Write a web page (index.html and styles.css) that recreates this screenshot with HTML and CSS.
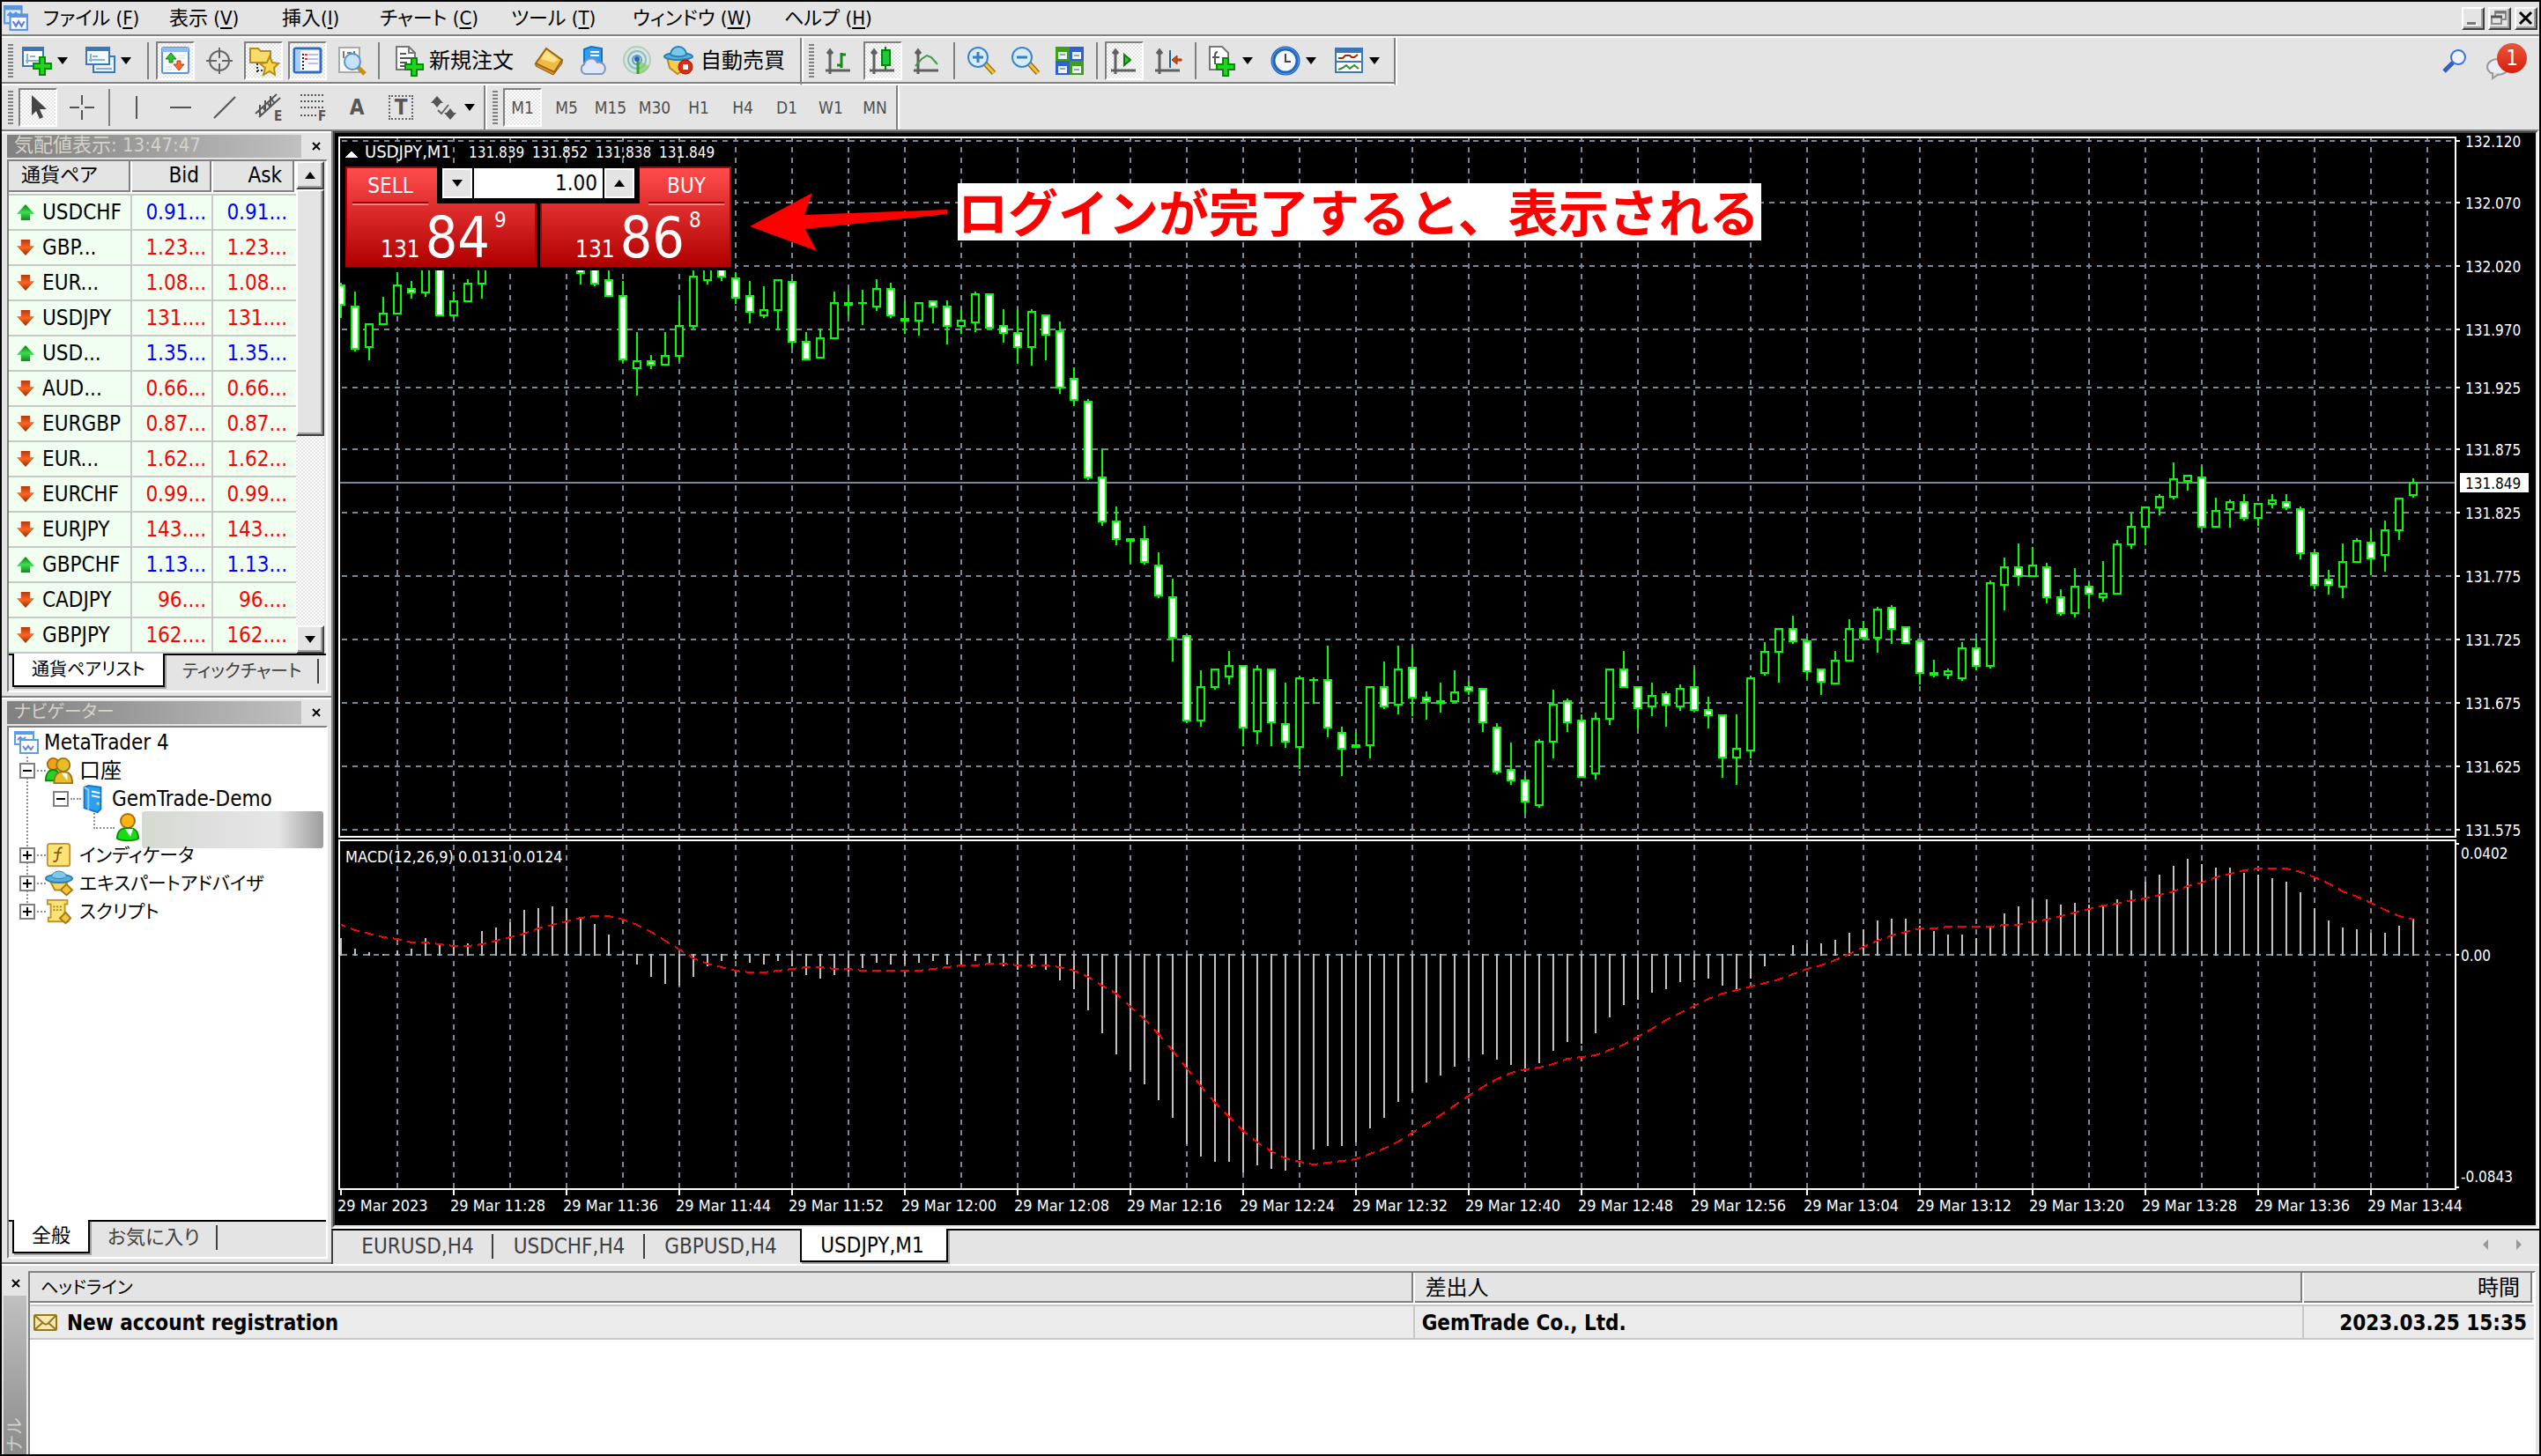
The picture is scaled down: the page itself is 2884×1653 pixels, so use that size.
FILE: index.html
```html
<!DOCTYPE html>
<html lang="ja">
<head>
<meta charset="utf-8">
<title>MetaTrader 4 - USDJPY,M1</title>
<link rel="stylesheet" href="styles.css">
</head>
<body>

<header class="menubar">
  <svg class="app-icon" viewBox="0 0 26 28"><rect x="1" y="1" width="18" height="18" fill="#dcebfc" stroke="#5b93dc" stroke-width="2"/><path d="M0 1h20v4H0z" fill="#5b93dc"/><path d="M4 11l3-3 3 3 3-3 3 3" fill="none" stroke="#5b93dc" stroke-width="2"/><rect x="7" y="10" width="18" height="16" fill="#fff" stroke="#5b93dc" stroke-width="2"/><path d="M6 9h20v4H6z" fill="#5b93dc"/><path d="M10 17l3 5 3-5 3 5 3-5" fill="none" stroke="#5b7fe0" stroke-width="2"/></svg>
  <nav class="menu">
    <button>ファイル (<u>F</u>)</button>
    <button>表示 (<u>V</u>)</button>
    <button>挿入(<u>I</u>)</button>
    <button>チャート (<u>C</u>)</button>
    <button>ツール (<u>T</u>)</button>
    <button>ウィンドウ (<u>W</u>)</button>
    <button>ヘルプ (<u>H</u>)</button>
  </nav>
  <div class="window-buttons">
    <button aria-label="最小化"><svg viewBox="0 0 22 22"><path d="M4 18h12" stroke="#fff" stroke-width="2"/><path d="M4 16.500h10" stroke="#777" stroke-width="3"/></svg></button>
    <button aria-label="元に戻す"><svg viewBox="0 0 22 22"><path d="M6 8V3h12v9h-4" fill="none" stroke="#888" stroke-width="2"/><path d="M6 4h12" stroke="#777" stroke-width="3"/><rect x="2" y="9" width="11" height="8" fill="#e4e4e4" stroke="#888" stroke-width="2"/><path d="M1 9h13" stroke="#555" stroke-width="3"/></svg></button>
    <button aria-label="閉じる"><svg viewBox="0 0 22 22"><path d="M4 4l13 13M17 4L4 17" stroke="#000" stroke-width="3"/></svg></button>
  </div>
</header>

<div class="toolbar-row">
  <div class="toolbar">
    <span class="grip"></span>
    <button class="tool drop" aria-label="新規チャート"><svg class="icon" viewBox="0 0 34 34"><rect x="1" y="2" width="23" height="21" fill="#fff" stroke="#3a77b8" stroke-width="2"/><path d="M0 1h25v5H0z" fill="#3a77b8"/><path d="M6 9v11M4 17h16M9 12h6" stroke="#8ab0d8" stroke-width="2"/><path d="M20 13h6v7h7v6h-7v7h-6v-7h-7v-6h7z" fill="#1fd51f" stroke="#078a07" stroke-width="2"/></svg><i class="caret"></i></button>
    <button class="tool drop" aria-label="プロファイル"><svg class="icon" viewBox="0 0 34 34"><rect x="9" y="12" width="24" height="18" fill="#eaf4ff" stroke="#3a77b8" stroke-width="2"/><path d="M12 26h18" stroke="#8ab0d8" stroke-width="2"/><rect x="1" y="2" width="26" height="19" fill="#f4f9ff" stroke="#3a77b8" stroke-width="2"/><path d="M0 1h28v5H0z" fill="#3a77b8"/><path d="M6 9v9M4 16h18M8 12h6" stroke="#8ab0d8" stroke-width="2"/></svg><i class="caret"></i></button>
    <span class="sep"></span>
    <button class="tool pressed" aria-label="気配値表示"><svg class="icon" viewBox="0 0 34 34"><rect x="2" y="2" width="30" height="29" rx="2" fill="#fff" stroke="#5b93dc" stroke-width="2"/><path d="M2 2h30v5H2z" fill="#8fbcf0"/><path d="M12 8l6 7h-4v4h-4v-4H6z" fill="#2fc12f" stroke="#0a7d0a"/><path d="M21 28l-6-7h4v-4h4v4h4z" fill="#ff6a35" stroke="#c13a10"/><path d="M20 11h8M20 14h8M6 24h7M6 27h7" stroke="#cdd6e2"/></svg></button>
    <button class="tool" aria-label="データウィンドウ"><svg class="icon" viewBox="0 0 34 34"><circle cx="17" cy="17" r="11" fill="none" stroke="#666" stroke-width="2"/><path d="M17 2v12M17 20v12M2 17h12M20 17h12" stroke="#666" stroke-width="2"/></svg></button>
    <button class="tool pressed" aria-label="ナビゲーター"><svg class="icon" viewBox="0 0 34 34"><path d="M2 3h9l3 3h11v13H2z" fill="#f6dd6d" stroke="#b58b14" stroke-width="2"/><path d="M10 20v12M10 28h8" stroke="#333" stroke-dasharray="2 2" stroke-width="2"/><path d="M24 12l3 7 7 1-5 5 1 8-6-4-7 4 2-8-6-5 8-1z" fill="#ffd94d" stroke="#b58b14" stroke-width="2"/></svg></button>
    <button class="tool pressed" aria-label="ターミナル"><svg class="icon" viewBox="0 0 34 34"><rect x="2" y="3" width="30" height="27" rx="2" fill="#fff" stroke="#2f6cc0" stroke-width="3"/><path d="M3 4h6v25H3z" fill="#a8cdf5"/><path d="M12 9v18" stroke="#222" stroke-width="2" stroke-dasharray="2 2"/><path d="M14 10h3M14 15h3" stroke="#e33" stroke-width="2"/><path d="M18 10h11M18 15h11M18 20h11" stroke="#b4c2f2" stroke-width="2"/></svg></button>
    <button class="tool" aria-label="ストラテジーテスター"><svg class="icon" viewBox="0 0 34 34"><path d="M3 2h23v28H3z" fill="#fafafa" stroke="#aaa" stroke-width="2"/><path d="M8 6v8M20 6v6M12 8h5" stroke="#777" stroke-width="2"/><path d="M24 24l8 8" stroke="#c6920e" stroke-width="5"/><circle cx="18" cy="18" r="9" fill="#bfe0fb" fill-opacity=".9" stroke="#5c93c9" stroke-width="2"/></svg></button>
    <span class="sep"></span>
    <button class="tool labelled order"><svg class="icon" viewBox="0 0 34 34"><path d="M3 1h14l7 7v19H3z" fill="#fff" stroke="#777" stroke-width="2"/><path d="M17 1v7h7" fill="none" stroke="#777" stroke-width="2"/><path d="M7 9h7M7 14h13M7 19h8M7 23h6" stroke="#555" stroke-width="2"/><path d="M20 14h6v7h7v6h-7v7h-6v-7h-7v-6h7z" fill="#1fd51f" stroke="#078a07" stroke-width="2"/></svg>新規注文</button>
    <button class="tool" aria-label="MetaEditor"><svg class="icon" viewBox="0 0 34 34"><path d="M14 3l18 13-9 14L2 20z" fill="#f0bb45" stroke="#9a6512" stroke-width="2"/><path d="M2 20l21 10 9-14v4L22 33 2 23z" fill="#d8901c" stroke="#8a5a10"/><path d="M14 5l14 11-6 3L8 15z" fill="#ffe08c"/></svg></button>
    <button class="tool" aria-label="VPS"><svg class="icon" viewBox="0 0 34 34"><path d="M7 4l8-3 12 2v19H7z" fill="#2f9df0" stroke="#1473c0" stroke-width="2"/><path d="M14 7h10M14 11h10" stroke="#fff" stroke-width="2"/><path d="M8 32a6 6 0 0 1-1-11 8 8 0 0 1 15-2 7 7 0 0 1 5 13z" fill="#dfe6f6" stroke="#8195bd" stroke-width="2"/></svg></button>
    <button class="tool" aria-label="シグナル"><svg class="icon" viewBox="0 0 34 34"><circle cx="17" cy="16" r="15" fill="#d4e8d8" stroke="#b4ccbe" stroke-width="2"/><circle cx="17" cy="16" r="10" fill="none" stroke="#8fb8d4" stroke-width="2"/><circle cx="17" cy="16" r="5" fill="none" stroke="#5f96cc" stroke-width="2"/><path d="M17 16v16h3a15 15 0 0 0 11-9z" fill="#7dcb5a" fill-opacity=".6"/><path d="M18 15v17" stroke="#35a52b" stroke-width="3"/><circle cx="17" cy="15" r="3" fill="#2b62c0"/></svg></button>
    <button class="tool labelled auto"><svg class="icon" viewBox="0 0 34 34"><path d="M4 13h24l-3 13-9 6-9-7z" fill="#f8cd4a" stroke="#c08a14" stroke-width="2"/><ellipse cx="17" cy="12" rx="16" ry="4" fill="#58b0e0" stroke="#2a7fb4" stroke-width="2"/><path d="M8 10c0-5 4-9 9-9s9 4 9 9c-4 3-14 3-18 0z" fill="#7cc9ee" stroke="#2a7fb4" stroke-width="2"/><circle cx="25" cy="24" r="8" fill="#e02a14" stroke="#a81404"/><path d="M22 21h6v6h-6z" fill="#fff"/></svg>自動売買</button>
  </div>
  <div class="toolbar">
    <span class="grip"></span>
    <button class="tool" aria-label="バーチャート"><svg class="icon" viewBox="0 0 34 34"><path class="axes" d="M7 6v26M2 28h28M4 9l3-4 3 4"/><path d="M20 8v17M20 10h5M15 22h5" stroke="#178a17" stroke-width="3"/></svg></button>
    <button class="tool pressed" aria-label="ローソク足"><svg class="icon" viewBox="0 0 34 34"><path class="axes" d="M7 6v26M2 28h28M4 9l3-4 3 4"/><path d="M20 1v26" stroke="#0a7d0a" stroke-width="2"/><rect x="16" y="5" width="9" height="17" fill="#1dc93d" stroke="#0a7d0a" stroke-width="2"/></svg></button>
    <button class="tool" aria-label="ラインチャート"><svg class="icon" viewBox="0 0 34 34"><path class="axes" d="M7 6v26M2 28h28M4 9l3-4 3 4"/><path d="M4 23l7-8 6-4 5 2 7 8" fill="none" stroke="#3f9c46" stroke-width="2"/></svg></button>
    <span class="sep"></span>
    <button class="tool" aria-label="ズームイン"><svg class="icon" viewBox="0 0 34 34"><path d="M21 20l10 11" stroke="#9a7410" stroke-width="6"/><path d="M21 20l10 11" stroke="#f2c63c" stroke-width="3"/><circle cx="13" cy="13" r="11" fill="#d5ecfc" stroke="#3f85c8" stroke-width="2"/><path d="M13 7v12M7 13h12" stroke="#3f7fb4" stroke-width="3"/></svg></button>
    <button class="tool" aria-label="ズームアウト"><svg class="icon" viewBox="0 0 34 34"><path d="M21 20l10 11" stroke="#9a7410" stroke-width="6"/><path d="M21 20l10 11" stroke="#f2c63c" stroke-width="3"/><circle cx="13" cy="13" r="11" fill="#d5ecfc" stroke="#3f85c8" stroke-width="2"/><path d="M7 13h12" stroke="#3f7fb4" stroke-width="3"/></svg></button>
    <button class="tool" aria-label="整列"><svg class="icon" viewBox="0 0 34 34"><path d="M1 1h16v16H1zM17 17h16v16H17z" fill="#3f9f17"/><path d="M17 1h16v16H17zM1 17h16v16H1z" fill="#2f62d0"/><path d="M4 7h10v8H4zM20 7h10v8H20zM4 23h10v8H4zM20 23h10v8H20z" fill="#eef4ff"/><path d="M6 10h6M22 11h6M6 26h6M22 27h6" stroke="#8aa" stroke-width="2"/></svg></button>
    <span class="sep"></span>
    <button class="tool pressed" aria-label="自動スクロール"><svg class="icon" viewBox="0 0 34 34"><path class="axes" d="M7 6v26M2 28h28M4 9l3-4 3 4"/><path d="M17 10l7 6-7 6z" fill="#36c236" stroke="#0a7d0a" stroke-width="2"/></svg></button>
    <button class="tool" aria-label="チャートシフト"><svg class="icon" viewBox="0 0 34 34"><path class="axes" d="M7 6v26M2 28h28M4 9l3-4 3 4"/><path d="M19 5v20" stroke="#176a9c" stroke-width="2"/><path d="M21 16l6-5v4h5v2h-5v4z" fill="#d24b12" stroke="#a03000"/></svg></button>
    <span class="sep"></span>
    <button class="tool drop" aria-label="インディケータ"><svg class="icon" viewBox="0 0 34 34"><path d="M3 1h14l7 7v19H3z" fill="#fff" stroke="#777" stroke-width="2"/><path d="M12 7c-4 0-3 5-3 14M6 13h8" fill="none" stroke="#555" stroke-width="2"/><path d="M18 14h6v7h7v6h-7v7h-6v-7h-7v-6h7z" fill="#1fd51f" stroke="#078a07" stroke-width="2"/></svg><i class="caret"></i></button>
    <button class="tool drop" aria-label="時間足設定"><svg class="icon" viewBox="0 0 34 34"><circle cx="17" cy="17" r="14" fill="#f4f8fd" stroke="#2166bd" stroke-width="5"/><circle cx="17" cy="17" r="15" fill="none" stroke="#5fa0ea" stroke-width="1"/><path d="M17 9v9h6" fill="none" stroke="#444" stroke-width="2"/></svg><i class="caret"></i></button>
    <button class="tool drop" aria-label="定型チャート"><svg class="icon" viewBox="0 0 34 34"><rect x="2" y="3" width="30" height="27" fill="#fff" stroke="#3a77b8" stroke-width="2"/><path d="M1 2h32v6H1zM1 17h32v2H1z" fill="#3a77b8"/><path d="M5 14h5l3-3h5l2 2h3l4-3" fill="none" stroke="#9a2a10" stroke-width="2"/><path d="M5 27l5-2 4-3 4 4 5-4 5 4" fill="none" stroke="#2f8f2f" stroke-width="2"/></svg><i class="caret"></i></button>
  </div>
  <div class="status-icons">
    <button aria-label="検索"><svg viewBox="0 0 28 28"><path d="M2 26l10-10" stroke="#2f5fbf" stroke-width="5"/><circle cx="18" cy="10" r="8" fill="#eef3fb" stroke="#3a6fd8" stroke-width="2"/></svg></button>
    <button class="chat" aria-label="通知"><svg viewBox="0 0 28 28"><ellipse cx="13" cy="13" rx="12" ry="9" fill="#ececf4" stroke="#999" stroke-width="2"/><path d="M7 19v7l7-5" fill="#ddd" stroke="#999" stroke-width="2"/></svg><span class="badge">1</span></button>
  </div>
</div>

<div class="toolbar-row second">
  <div class="toolbar">
    <span class="grip"></span>
    <button class="tool pressed" aria-label="カーソル"><svg class="icon" viewBox="0 0 34 34"><path d="M10 3v23l5-5 4 9 4-2-4-9h8z" fill="#444"/></svg></button>
    <button class="tool" aria-label="十字カーソル"><svg class="icon thin" viewBox="0 0 34 34"><path d="M17 3v11M17 20v11M3 17h11M20 17h11"/></svg></button>
    <span class="sep"></span>
    <button class="tool" aria-label="垂直線"><svg class="icon thin" viewBox="0 0 34 34"><path d="M17 4v26"/></svg></button>
    <button class="tool" aria-label="水平線"><svg class="icon thin" viewBox="0 0 34 34"><path d="M5 17h24"/></svg></button>
    <button class="tool" aria-label="トレンドライン"><svg class="icon thin" viewBox="0 0 34 34"><path d="M5 29L29 5"/></svg></button>
    <button class="tool" aria-label="等距離チャネル"><svg class="icon thin" viewBox="0 0 34 34"><path d="M2 24L26 2M6 28L30 6M5 20l4 6M10 16l4 6M15 11l4 6M20 7l4 6M7 14v12M13 9v13M19 4v13"/><text x="23" y="32" class="glyph">E</text></svg></button>
    <button class="tool" aria-label="フィボナッチ"><svg class="icon thin" viewBox="0 0 34 34"><path stroke-dasharray="2 2" d="M3 3h28M3 10h28M3 17h28M3 26h18"/><text x="23" y="32" class="glyph">F</text></svg></button>
    <button class="tool letter" aria-label="テキスト">A</button>
    <button class="tool letter" aria-label="ラベル"><span class="dotted">T</span></button>
    <button class="tool drop" aria-label="矢印"><svg class="icon" viewBox="0 0 34 34"><path d="M9 4l7 8H2zM5 12h8l-4 5zM24 31l-7-8h14zM20 23h8l-4-5z" fill="#555"/><path d="M10 20l4 4 8-10" fill="none" stroke="#666" stroke-width="2"/></svg><i class="caret"></i></button>
  </div>
  <div class="toolbar periods">
    <span class="grip"></span>
    <button class="tool pressed">M1</button>
    <button class="tool">M5</button>
    <button class="tool">M15</button>
    <button class="tool">M30</button>
    <button class="tool">H1</button>
    <button class="tool">H4</button>
    <button class="tool">D1</button>
    <button class="tool">W1</button>
    <button class="tool">MN</button>
  </div>
</div>

<main class="workspace">
  <aside class="sidebar">
    <section class="panel">
      <div class="panel-head"><h2>気配値表示: 13:47:47</h2><button class="close" aria-label="閉じる"><svg viewBox="0 0 10 10"><path d="M1 1l8 8M9 1L1 9"/></svg></button></div>
      <div class="panel-box">
        <div class="quotes-wrap">
          <table class="quotes">
            <thead><tr><th>通貨ペア</th><th>Bid</th><th>Ask</th></tr></thead>
            <tbody>
              <tr class="up"><td>USDCHF</td><td>0.91...</td><td>0.91...</td></tr>
              <tr class="down"><td>GBP...</td><td>1.23...</td><td>1.23...</td></tr>
              <tr class="down"><td>EUR...</td><td>1.08...</td><td>1.08...</td></tr>
              <tr class="down"><td>USDJPY</td><td>131....</td><td>131....</td></tr>
              <tr class="up"><td>USD...</td><td>1.35...</td><td>1.35...</td></tr>
              <tr class="down"><td>AUD...</td><td>0.66...</td><td>0.66...</td></tr>
              <tr class="down"><td>EURGBP</td><td>0.87...</td><td>0.87...</td></tr>
              <tr class="down"><td>EUR...</td><td>1.62...</td><td>1.62...</td></tr>
              <tr class="down"><td>EURCHF</td><td>0.99...</td><td>0.99...</td></tr>
              <tr class="down"><td>EURJPY</td><td>143....</td><td>143....</td></tr>
              <tr class="up"><td>GBPCHF</td><td>1.13...</td><td>1.13...</td></tr>
              <tr class="down"><td>CADJPY</td><td>96....</td><td>96....</td></tr>
              <tr class="down"><td>GBPJPY</td><td>162....</td><td>162....</td></tr>
            </tbody>
          </table>
          <div class="scrollbar">
            <button class="raised" aria-label="上へ"><i class="caret-up"></i></button>
            <div class="thumb raised"></div>
            <div class="track"></div>
            <button class="raised" aria-label="下へ"><i class="caret"></i></button>
          </div>
        </div>
        <div class="tabs compact"><button class="tab active">通貨ペアリスト</button><button class="tab">ティックチャート</button></div>
      </div>
    </section>

    <section class="panel grow">
      <div class="panel-head"><h2 class="kana">ナビゲーター</h2><button class="close" aria-label="閉じる"><svg viewBox="0 0 10 10"><path d="M1 1l8 8M9 1L1 9"/></svg></button></div>
      <div class="panel-box">
        <ul class="tree">
          <li class="root"><svg viewBox="0 0 28 28"><rect x="1" y="2" width="21" height="14" fill="#fff" stroke="#5a9fe0" stroke-width="2"/><path d="M0 1h23v4H0z" fill="#5a9fe0"/><path d="M4 11l3-3 3 3 3-3" fill="none" stroke="#6b86e0" stroke-width="2"/><rect x="7" y="11" width="20" height="15" fill="#fff" stroke="#5a9fe0" stroke-width="2"/><path d="M10 18l3 4 3-4 3 4 3-4" fill="none" stroke="#6b86e0" stroke-width="2"/></svg>MetaTrader 4</li>
          <li class="branch kanji"><i class="box"></i><svg viewBox="0 0 34 34"><circle cx="10" cy="9" r="7" fill="#f0a415" stroke="#a86c06" stroke-width="2"/><path d="M1 29c0-9 4-13 9-13s8 4 8 13z" fill="#25d325" stroke="#0a8a0a" stroke-width="2"/><circle cx="22" cy="10" r="8" fill="#e8bd28" stroke="#9a7510" stroke-width="2"/><path d="M11 32c0-10 4-14 11-14s11 4 11 14z" fill="#e8bd28" stroke="#9a7510" stroke-width="2"/><path d="M20 20l7 9V20z" fill="#fff"/></svg>口座</li>
          <li class="branch second"><i class="box"></i><svg viewBox="0 0 24 34"><path d="M2 3l5-2 15 2v26l-4 4L2 28z" fill="#2aa0f5" stroke="#1473c0" stroke-width="2"/><path d="M11 8l10 2M11 13l10 2" stroke="#fff" stroke-width="2"/><path d="M17 21h3v3h-3z" fill="#ffd23c"/><path d="M2 3l5 3v25" fill="none" stroke="#8fd0ff" stroke-width="2"/></svg>GemTrade-Demo</li>
          <li class="leaf"><svg viewBox="0 0 26 32"><circle cx="13" cy="9" r="8" fill="#fdb515" stroke="#a86c06" stroke-width="2"/><path d="M1 29c0-9 4-12 12-12s12 3 12 12c-4 3-20 3-24 0z" fill="#18dc18" stroke="#0a8a0a" stroke-width="2"/><path d="M10 18l6 9 3-9z" fill="#fff"/></svg><span class="redacted"></span></li>
          <li class="branch"><i class="box plus"></i><svg viewBox="0 0 34 34"><rect x="3" y="3" width="27" height="27" rx="3" fill="#fbe275" stroke="#c09522" stroke-width="2"/><path d="M21 8c-6-2-5 8-6 13-1 4-3 4-5 3M11 14h9" fill="none" stroke="#7d5f10" stroke-width="2"/></svg>インディケータ</li>
          <li class="branch"><i class="box plus"></i><svg viewBox="0 0 34 34"><path d="M7 16h20l-5 9H12z" fill="#f8d55a" stroke="#b58b14" stroke-width="2"/><ellipse cx="17" cy="11" rx="16" ry="5" fill="#58b0e0" stroke="#2a7fb4" stroke-width="2"/><path d="M8 9c1-9 17-9 18 0-4 3-14 3-18 0z" fill="#7cc9ee" stroke="#2a7fb4"/><path d="M26 18l7 7-7 6-7-6z" fill="#f2c63c" stroke="#a07a12" stroke-width="2"/></svg>エキスパートアドバイザ</li>
          <li class="branch"><i class="box plus"></i><svg viewBox="0 0 34 34"><path d="M3 3h24v5h-3v16h4v5H4v-5h3V8H3z" fill="#fbe275" stroke="#c09522" stroke-width="2"/><path d="M10 11h11M10 15h11" stroke="#a07a12" stroke-dasharray="2 2" stroke-width="2"/><path d="M25 18l6 7-6 6-7-6z" fill="#f2c63c" stroke="#a07a12" stroke-width="2"/></svg>スクリプト</li>
        </ul>
        <div class="tabs"><button class="tab active">全般</button><button class="tab">お気に入り</button></div>
      </div>
    </section>
  </aside>

  <div class="charts">
    <div class="chart-window">
      <svg id="chart" class="chart" viewBox="380 151 2498 1240"></svg>
      <form class="one-click">
        <button type="button" class="side sell"><span class="side-name">SELL</span><span class="quote">131<b>84</b><sup>9</sup></span></button>
        <button type="button" class="side buy"><span class="side-name">BUY</span><span class="quote">131<b>86</b><sup>8</sup></span></button>
        <div class="volume">
          <button type="button" aria-label="減らす"><i class="caret"></i></button>
          <input aria-label="ロット" value="1.00">
          <button type="button" aria-label="増やす"><i class="caret-up"></i></button>
        </div>
      </form>
      <p class="callout">ログインが完了すると、表示される</p>
    </div>
    <div class="chart-tabs">
      <button class="ctab">EURUSD,H4</button>
      <button class="ctab">USDCHF,H4</button>
      <button class="ctab">GBPUSD,H4</button>
      <button class="ctab active">USDJPY,M1</button>
      <span class="tab-scroll"><i class="left"></i><i class="right"></i></span>
    </div>
  </div>
</main>

<section class="terminal">
  <div class="terminal-side"><button class="close" aria-label="閉じる"><svg viewBox="0 0 10 10"><path d="M1 1l8 8M9 1L1 9"/></svg></button><div class="terminal-title"><span>ターミナル</span></div></div>
  <div class="terminal-body">
    <table class="mail">
      <thead><tr><th>ヘッドライン</th><th>差出人</th><th>時間</th></tr></thead>
      <tbody><tr><td><svg viewBox="0 0 28 20"><rect x="1" y="1" width="25" height="17" rx="1" fill="#fbe6b0" stroke="#8f7a1e" stroke-width="2"/><path d="M2 2l9 8c2 2 4 2 6 0l8-8M2 17l8-7M25 17l-8-7" fill="none" stroke="#8f7a1e" stroke-width="2"/></svg>New account registration</td><td>GemTrade Co., Ltd.</td><td>2023.03.25 15:35</td></tr></tbody>
    </table>
  </div>
</section>

<script src="chart.js"></script>
</body>
</html>
```
FILE: styles.css
```css
:root {
  --face: #e4e4e4;
  --shade: #808080;
  --dark: #404040;
  --rule: #c8c8c8;
  --dither: repeating-conic-gradient(#fff 0 25%, #e4e4e4 0 50%) 0 0 / 4px 4px;
}
* { box-sizing: border-box; }
body {
  margin: 0;
  height: 100vh;
  display: flex;
  flex-direction: column;
  border: 2px solid #000;
  background: var(--face);
  font-family: "DejaVu Sans Condensed", "DejaVu Sans", "Noto Sans CJK JP", sans-serif;
  font-size: 24px;
  line-height: 32px;
  color: #000;
  overflow: hidden;
}
button { font: inherit; color: inherit; background: none; border: 0; padding: 0; margin: 0; border-radius: 0; }
h2, p, ul { margin: 0; padding: 0; font-weight: normal; font-size: inherit; list-style: none; }
svg { display: block; flex: none; overflow: visible; }

.caret, .caret-up { width: 0; height: 0; border: 6px solid transparent; flex: none; }
.caret { border-top: 8px solid #000; border-bottom: 0; }
.caret-up { border-bottom: 8px solid #000; border-top: 0; }

/* menu bar */
.menubar {
  flex: none;
  height: 41px;
  display: flex;
  align-items: center;
  border-bottom: 2px solid #fff;
  box-shadow: inset 0 -2px var(--shade);
  padding: 0 2px 1px;
}
.app-icon { width: 28px; height: 30px; margin-right: 17px; }
.menu {
  flex: 1;
  display: grid;
  grid-template-columns: 143px 128px 111px 149px 138px 172px auto;
  justify-items: start;
  font-size: 22px;
  font-feature-settings: "palt";
  white-space: nowrap;
}
.menu u { text-underline-offset: 3px; }
.window-buttons { display: flex; gap: 4px; }
.window-buttons button, .raised {
  border: 2px solid;
  border-color: #fff var(--dark) var(--dark) #fff;
  box-shadow: inset -2px -2px #a0a0a0;
  background: var(--face);
}
.window-buttons button { width: 26px; height: 26px; }

/* toolbars */
.toolbar-row { flex: none; display: flex; height: 54px; }
.toolbar-row.second { height: 50px; }
.toolbar {
  display: flex;
  align-items: center;
  gap: 6px;
  padding: 0 6px 0 7px;
  border-right: 2px solid var(--shade);
  border-bottom: 2px solid #fff;
  box-shadow: inset 0 -2px var(--shade), 2px 0 #fff;
}
.second .toolbar { border-bottom: 0; box-shadow: 2px 0 #fff; padding-right: 2px; }
.second .toolbar:first-child { padding-right: 0; }
.toolbar + .toolbar { padding-left: 8px; }
.grip {
  width: 6px;
  height: 38px;
  background: repeating-linear-gradient(#808080 0 2px, transparent 2px 4px);
}
.tool {
  width: 44px;
  height: 44px;
  display: flex;
  align-items: center;
  justify-content: center;
  border: 2px solid transparent;
}
.tool.pressed { background: var(--dither); border-color: var(--shade) #fff #fff var(--shade); }
.tool.drop { width: 66px; justify-content: flex-start; gap: 6px; padding: 0 0 0 2px; }
.tool.labelled { justify-content: flex-start; gap: 6px; padding-left: 6px; white-space: nowrap; }
.tool.order { width: 156px; }
.tool.auto { width: 151px; padding-left: 0; gap: 8px; }
.icon { width: 34px; height: 34px; }
.axes { fill: none; stroke: #606060; stroke-width: 3; }
.thin { fill: none; stroke: #555; stroke-width: 2; }
.glyph { fill: #555; stroke: none; font-size: 15px; font-weight: bold; }
.sep { width: 2px; height: 42px; margin: 0 2px; background: var(--shade); }
.letter { font-weight: bold; color: #555; }
.dotted { border: 2px dotted #666; line-height: 24px; width: 28px; height: 28px; }
.periods { font-size: 19px; color: #505050; }
.status-icons { margin-left: auto; display: flex; align-items: flex-start; gap: 22px; padding: 12px 32px 0 0; }
.status-icons svg { width: 28px; height: 28px; }
.chat { position: relative; }
.chat svg { margin-top: 8px; }
.badge {
  position: absolute;
  left: 12px;
  top: -6px;
  width: 34px;
  height: 34px;
  border-radius: 50%;
  background: linear-gradient(#e8573b, #d81e0a);
  color: #fff;
  line-height: 34px;
  text-align: center;
}

/* workspace */
.workspace { flex: none; display: flex; }
.sidebar { flex: none; width: 374px; display: flex; flex-direction: column; border-bottom: 2px solid var(--shade); }
.panel {
  display: flex;
  flex-direction: column;
  gap: 2px;
  border-top: 2px solid var(--shade);
  box-shadow: inset 0 2px #fff;
  padding: 4px 4px 4px 6px;
}
.panel.grow { flex: 1; }
.panel-head { display: flex; align-items: center; height: 26px; }
.panel-head h2 {
  flex: 1;
  height: 26px;
  line-height: 24px;
  padding-left: 8px;
  background: linear-gradient(90deg, #808080, #c0c0c0);
  color: #d6d2c8;
  font-size: 22px;
  font-feature-settings: "palt";
}
.panel-head h2.kana { font-size: 20px; }
.close { width: 30px; height: 26px; display: grid; place-items: center; padding-left: 4px; }
.close svg { width: 10px; height: 10px; fill: none; stroke: #000; stroke-width: 2; }
.panel-box {
  flex: 1;
  display: flex;
  flex-direction: column;
  border: 2px solid;
  border-color: var(--shade) #fff #fff var(--shade);
}
.quotes-wrap { display: flex; }
.quotes { width: 326px; table-layout: fixed; border-spacing: 0; border-bottom: 2px solid var(--rule); }
.quotes th, .mail th {
  font-weight: normal;
  background: var(--face);
  border-right: 2px solid #fff;
  border-bottom: 2px solid #fff;
  box-shadow: inset -2px -2px var(--shade);
}
.quotes th { height: 37px; padding: 0 14px 4px; line-height: 30px; text-align: right; }
.quotes th:first-child { width: 140px; text-align: left; font-size: 22px; font-feature-settings: "palt"; }
.quotes th:nth-child(2) { width: 92px; }
.quotes td {
  height: 40px;
  padding: 0 10px 0 0;
  text-align: right;
  white-space: nowrap;
  background: #f0fff0;
  border-top: 2px solid var(--rule);
  border-right: 2px solid var(--rule);
}
.quotes td:nth-child(2) { padding-right: 6px; }
.quotes td:last-child { border-right: 0; }
.quotes td:first-child { text-align: left; padding: 0; color: #000; }
.quotes td:first-child::before {
  content: "";
  display: inline-block;
  width: 20px;
  height: 18px;
  margin: 0 9px -1px 9px;
  clip-path: polygon(50% 0, 100% 60%, 76% 60%, 76% 100%, 24% 100%, 24% 60%, 0 60%);
  background: linear-gradient(#0a7a0a, #3fdb4f 50%, #0a8a1a);
}
.quotes .down td:first-child::before {
  transform: rotate(180deg);
  background: linear-gradient(#8a2a08, #ff6420 50%, #b03a10);
}
.quotes .up { color: #00f; }
.quotes .down { color: #f00; }
.scrollbar { width: 32px; display: flex; flex-direction: column; background: var(--dither); }
.scrollbar button { height: 32px; display: flex; align-items: center; justify-content: center; }
.thumb { height: 280px; }
.track { flex: 1; }
.tabs {
  display: flex;
  align-items: flex-start;
  height: 42px;
  margin-top: auto;
  padding-left: 4px;
  border-top: 2px solid #000;
  background: var(--face);
  font-size: 22px;
  font-feature-settings: "palt";
  color: #404040;
}
.tabs.compact { font-size: 20px; }
.tab { padding: 0 20px; height: 36px; line-height: 34px; white-space: nowrap; }
.tab.active, .ctab.active {
  background: #fff;
  color: #000;
  border: 2px solid #000;
  border-top: 0;
  box-shadow: 2px 2px #a0a0a0;
}
.tab.active { margin-top: -2px; height: 38px; line-height: 36px; }
.tab:not(.active) { position: relative; }
.tab:not(.active)::after, .ctab:nth-child(-n+2)::after {
  content: "";
  position: absolute;
  right: 0;
  top: 4px;
  width: 2px;
  height: 28px;
  background: #404040;
}

/* navigator tree */
.tree { flex: 1; background: #fff; padding-top: 1px; position: relative; }
.tree::before {
  content: "";
  position: absolute;
  left: 20px;
  top: 33px;
  height: 178px;
  border-left: 2px dotted #909090;
}
.tree li { display: flex; align-items: center; height: 32px; position: relative; font-feature-settings: "palt"; }
.tree .root { padding-left: 6px; }
.root svg { width: 28px; height: 28px; margin-right: 6px; }
.tree .branch { padding-left: 12px; font-size: 21px; }
.tree .kanji { font-size: 24px; }
.branch svg { width: 34px; height: 32px; margin: 0 6px 0 10px; }
.branch::before, .leaf::before { content: ""; position: absolute; left: 32px; top: 15px; width: 10px; border-top: 2px dotted #909090; }
.tree .second { padding-left: 50px; font-size: 24px; }
.branch.second::before { left: 70px; width: 12px; }
.branch.second svg { width: 24px; margin: 0 10px 0 15px; }
.leaf { padding-left: 122px; }
.leaf::before { left: 96px; top: 0; width: 22px; height: 16px; border-top: 0; border-left: 2px dotted #909090; border-bottom: 2px dotted #909090; }
.leaf svg { width: 26px; height: 32px; }
.redacted { width: 206px; height: 42px; flex: none; margin-left: 3px; border-radius: 3px; background: linear-gradient(90deg, #d5dbd0, #dedede 35%, #e6e6e6 75%, #9c9c9c); }
.redacted { margin-top: 5px; }
.box {
  width: 18px;
  height: 18px;
  border: 2px solid #808080;
  position: relative;
  background: linear-gradient(#000, #000) center / 10px 2px no-repeat, #fff;
}
.box.plus { background: linear-gradient(#000, #000) center / 10px 2px no-repeat, linear-gradient(#000, #000) center / 2px 10px no-repeat, #fff; }

/* chart */
.charts { flex: 1; min-width: 0; display: flex; flex-direction: column; }
.chart-window {
  position: relative;
  border: 2px solid;
  border-color: var(--shade) #fff #fff var(--shade);
  background: #000;
}
.chart {
  width: 100%;
  height: auto;
  overflow: hidden;
  border: 2px solid;
  border-color: var(--dark) var(--face) var(--face) var(--dark);
}
.chart text { font-size: 18px; fill: #fff; }
.chart .axis { font-size: 17px; }
.chart .symbol { font-size: 20px; }
.chart .now { fill: #000; }
.one-click {
  position: absolute;
  left: 14px;
  top: 40px;
  width: 438px;
  height: 114px;
  display: grid;
  grid-template-columns: 1fr 1fr;
  gap: 4px;
  background: #000;
  box-shadow: 0 0 0 4px #000;
}
.side {
  display: flex;
  flex-direction: column;
  align-items: flex-start;
  background: linear-gradient(#ff4c4c, #b00000);
  border: 2px solid #b00000;
  color: #fff;
  clip-path: polygon(0 0, 104px 0, 104px 42px, 100% 42px, 100% 100%, 0 100%);
}
.side.buy { align-items: flex-end; clip-path: polygon(113px 0, 100% 0, 100% 100%, 0 100%, 0 42px, 113px 42px); }
.side-name { width: 86px; height: 42px; line-height: 40px; margin: 0 6px; border-bottom: 2px solid #ff8080; box-shadow: inset 0 -2px #a00000; text-align: center; }
.quote { width: 100%; height: 68px; padding: 5px 0 0 38px; display: flex; align-items: baseline; line-height: 68px; font-size: 26px; }
.quote b { font: 500 64px/64px "DejaVu Sans Condensed", sans-serif; margin-left: 6px; }
.quote sup { font-size: 24px; line-height: 24px; margin-left: 5px; align-self: flex-start; }
.volume { position: absolute; left: 110px; top: 2px; width: 218px; height: 34px; display: flex; gap: 2px; }
.volume button { width: 34px; background: var(--face); border: 2px solid #fff; display: flex; align-items: center; justify-content: center; }
.volume input { flex: 1; min-width: 0; border: 0; padding: 0 6px 0 0; font: inherit; text-align: right; background: #fff; }
.callout {
  position: absolute;
  left: 709px;
  top: 59px;
  padding: 0 2px 4px 0;
  background: #fff;
  color: #f00;
  font: bold 57px/61px "Noto Sans CJK JP", sans-serif;
  white-space: nowrap;
}
.chart-tabs {
  display: flex;
  align-items: flex-start;
  height: 40px;
  border-top: 2px solid #000;
  border-left: 2px solid var(--dark);
  padding-left: 10px;
  color: #404040;
}
.ctab { position: relative; width: 172px; height: 36px; line-height: 36px; text-align: center; }
.ctab.active { width: 168px; margin: -2px 0 0 4px; padding-right: 4px; height: 38px; line-height: 38px; }
.tab-scroll { margin: 10px 20px 0 auto; display: flex; gap: 32px; }
.tab-scroll i { border: 6px solid transparent; }
.tab-scroll .left { border-right-color: #999; border-left: 0; }
.tab-scroll .right { border-left-color: #999; border-right: 0; }

/* terminal */
.terminal { flex: 1; min-height: 0; display: flex; border-top: 2px solid #fff; padding: 6px 4px 0 2px; overflow: hidden; }
.terminal-side { width: 28px; display: flex; flex-direction: column; }
.terminal-side .close { height: 28px; flex: none; width: 28px; padding: 0; }
.terminal-title { flex: 1; min-height: 0; width: 26px; overflow: hidden; padding-top: 138px; background: linear-gradient(#c0c0c0, #8c8c8c); color: #d6d2c8; font-size: 20px; }
.terminal-title span { display: block; width: 26px; height: max-content; white-space: nowrap; writing-mode: vertical-rl; text-orientation: sideways; transform: rotate(180deg); line-height: 26px; }
.terminal-body { flex: 1; background: #fff; border-left: 2px solid var(--shade); border-top: 2px solid var(--shade); border-right: 2px solid #fff; }
.mail { width: 100%; table-layout: fixed; border-spacing: 0; }
.mail th { height: 36px; padding: 0 14px 0 12px; text-align: left; font-size: 24px; }
.mail th:first-child { width: 55.300%; font-size: 20px; font-feature-settings: "palt"; }
.mail th:nth-child(2) { width: 35.500%; }
.mail th:last-child, .mail td:last-child { text-align: right; }
.mail td {
  height: 40px;
  padding: 2px 8px 0;
  font-weight: bold;
  background: #ebebeb;
  border-top: 2px solid var(--rule);
  border-bottom: 2px solid var(--rule);
  border-right: 2px solid var(--rule);
}
.mail td:first-child { padding-left: 4px; }
.mail td:last-child { border-right: 0; }
.mail svg { display: inline-block; width: 28px; height: 20px; margin: 0 10px -2px 0; }
```
FILE: chart.js
```js
// Candles as "high top bottom low kind": d = bearish, u = bullish, x = doji, '-' = behind the trading panel.
const candles = `321 323 347 361 d|331 347 397 399 d|367 367 395 409 u|337 355 369 369 u|309 323 357 357 u|319 327 333 339 d
303 303 333 337 u|303 303 359 359 d|331 341 359 359 u|317 321 343 343 u|303 303 323 339 u|-|-|-|-|-|-
303 303 311 323 d|303 303 323 325 d|307 317 337 337 d|319 335 409 411 d|377 409 419 449 u|403 409 415 419 d
377 403 415 415 u|341 369 405 409 u|307 313 371 373 u|303 303 319 323 u|303 303 315 319 d|309 315 339 345 d
319 335 355 367 d|325 351 359 361 u|317 317 353 375 u|317 319 389 395 d|377 387 409 409 d|373 383 407 407 u
331 343 385 385 u|329 343 347 359 x|329 343 345 369 x|317 327 349 353 u|321 327 359 361 d|341 361 365 379 x
343 343 365 381 u|341 341 349 367 d|341 347 371 391 d|351 363 371 379 u|331 333 367 377 u|333 333 373 373 d
351 369 379 389 d|351 377 395 413 d|351 353 395 415 u|357 357 381 409 d|365 375 441 447 d|417 429 455 461 d
453 455 543 545 d|509 541 593 597 d|575 591 613 619 d|611 611 615 639 x|597 611 639 641 d|627 641 677 679 d
657 677 725 751 d|721 721 819 821 d|761 779 819 825 u|759 759 781 783 u|739 755 769 777 u|755 755 827 847 d
755 759 831 845 u|759 759 821 847 d|775 821 843 849 d|767 769 849 873 u|769 771 773 799 x|733 771 827 837 d
825 831 851 881 d|831 845 849 849 x|779 779 847 861 u|751 779 803 805 d|733 759 801 811 u|735 757 793 813 d
785 791 797 817 d|775 795 799 809 x|761 785 797 797 u|773 779 785 789 d|781 781 821 831 d|821 825 877 879 d
843 873 887 891 d|881 885 911 923 d|839 841 915 917 u|783 799 843 861 u|793 795 821 831 d|811 817 883 883 d
809 815 879 885 u|759 759 817 823 u|739 759 781 781 d|779 779 805 827 d|775 789 803 813 u|785 787 801 825 d
777 781 803 807 u|759 779 807 807 d|791 805 813 827 d|811 811 861 883 d|811 849 861 891 u|767 769 853 861 u
729 739 765 767 u|713 713 741 775 u|699 713 729 731 d|723 727 763 771 d|759 759 775 789 d|739 749 777 777 u
703 713 751 751 u|705 713 725 727 d|689 691 725 741 u|687 689 715 731 d|711 711 731 731 d|727 727 765 777 d
749 763 767 769 x|759 761 767 771 u|729 735 771 773 u|725 735 757 761 d|659 661 757 759 u|633 643 665 693 u
617 643 655 665 d|621 641 655 655 u|639 643 679 685 d|669 677 697 699 d|645 665 697 701 u|661 665 675 691 d
637 673 679 683 u|613 617 675 675 u|583 597 619 623 u|575 575 599 619 u|561 563 577 585 u|525 543 565 567 u
539 539 547 557 u|529 541 599 599 d|565 579 599 599 u|567 569 579 599 u|561 569 589 591 d|571 571 589 597 u
561 567 573 577 u|561 569 577 579 d|575 577 629 635 d|625 627 665 669 d|647 657 665 675 d|617 637 667 679 u
611 613 639 639 u|601 615 635 653 d|591 601 631 649 u|565 565 603 613 u|543 547 563 565 u`.split(/[|\n]/);

const histogram = [
  1065,1077,1081,1083,1079,1077,1065,1073,1073,1071,1057,1053,1047,1033,1031,1029,1031,1041,1049,1061,
  1081,1095,1109,1117,1119,1109,1097,1091,1089,1093,1095,1091,1097,1107,1111,1107,1103,1099,1093,1095,
  1095,1093,1091,1095,1097,1091,1093,1097,1101,1099,1101,1113,1123,1147,1173,1197,1215,1231,1249,1269,
  1299,1313,1319,1319,1331,1323,1327,1329,1317,1305,1301,1301,1297,1281,1269,1251,1239,1229,1221,1211,
  1201,1197,1203,1209,1215,1207,1193,1183,1185,1173,1155,1141,1135,1127,1123,1115,1113,1111,1119,1123,
  1111,1097,1085,1073,1071,1071,1067,1059,1055,1045,1043,1043,1051,1057,1061,1061,1065,1053,1037,1029,
  1021,1021,1027,1025,1027,1029,1021,1011,1001,993,983,975,981,985,985,991,993,997,1001,1013,
  1031,1045,1053,1055,1059,1059,1051,1043];

const signal = [
  1050,1056,1060,1064,1066,1070,1070,1072,1074,1074,1072,1068,1064,1060,1054,1050,1046,1042,1040,1040,
  1044,1050,1058,1068,1078,1088,1094,1098,1102,1104,1104,1102,1100,1098,1098,1100,1100,1102,1102,1102,
  1102,1102,1100,1098,1096,1096,1094,1094,1096,1096,1096,1098,1102,1109,1119,1128,1143,1157,1174,1193,
  1213,1233,1252,1268,1284,1297,1307,1315,1319,1322,1320,1318,1316,1310,1304,1296,1286,1276,1266,1255,
  1244,1234,1225,1218,1214,1212,1208,1202,1200,1198,1192,1186,1177,1168,1158,1150,1142,1134,1128,1124,
  1120,1116,1112,1106,1100,1096,1090,1083,1075,1068,1062,1058,1054,1054,1052,1052,1052,1052,1050,1050,
  1046,1044,1040,1036,1032,1028,1026,1022,1020,1016,1012,1006,1002,996,992,988,986,986,986,990,
  996,1003,1012,1018,1025,1033,1040,1044];

const X0 = 387, STEP = 16, LEFT = 386, RIGHT = 2787, TOP = 156, SPLIT = 950, BOTTOM = 1350, ZERO = 1084;
const out = [];
const path = (d, stroke, extra = '') => out.push(`<path d="${d}" stroke="${stroke}" stroke-width="2" fill="none" ${extra}/>`);
const text = (x, y, s, cls = '') => out.push(`<text x="${x}" y="${y}" class="${cls}">${s}</text>`);
const slate = '#778899';

// grid
for (let x = X0 + 64; x < RIGHT; x += 64) path(`M${x} 155V${BOTTOM}`, slate, 'stroke-dasharray="6 6"');
const prices = [[160,'132.120'],[230,'132.070'],[302,'132.020'],[374,'131.970'],[440,'131.925'],[510,'131.875'],
  [582,'131.825'],[654,'131.775'],[726,'131.725'],[798,'131.675'],[870,'131.625'],[942,'131.575']];
for (const [y] of prices.concat([[ZERO]])) path(`M388 ${y}H${RIGHT}`, slate, 'stroke-dasharray="6 6"');

// candles
path(`M${LEFT} 548H${RIGHT}`, slate);
candles.forEach((c, i) => {
  if (c === '-') return;
  const [h, t, b, l, k] = c.split(' ');
  const x = X0 + STEP * i;
  path(`M${x} ${h}V${l}`, '#0f0');
  const left = Math.max(x - 5, LEFT);
  out.push(`<path d="M${left} ${t}H${x + 5}V${b}H${left}z" fill="#0f0"/>`);
  if (k !== 'x') out.push(`<path d="M${Math.max(x - 3, LEFT)} ${+t + 2}H${x + 3}V${b - 2}H${Math.max(x - 3, LEFT)}z" fill="${k === 'd' ? '#fff' : '#000'}"/>`);
});

// MACD
histogram.forEach((y, i) => path(`M${X0 + STEP * i} ${y < ZERO ? ZERO + 1 : ZERO - 1}V${y}`, '#c0c0c0'));
signal.forEach((y, i) => {
  const x = X0 + STEP * i;
  const before = y + ((signal[i - 1] ?? y) - y) * 5 / STEP;
  const after = y + ((signal[i + 1] ?? y) - y) * 5 / STEP;
  path(`M${i ? x - 5 : x} ${before}L${x} ${y}L${i < 147 ? x + 5 : x} ${after}`, '#f00');
});

// frames
path(`M385 ${SPLIT}V${TOP}H${RIGHT}V${SPLIT}z`, '#fff');
path(`M385 954H${RIGHT}V${BOTTOM}H385z`, '#fff');

// scales
for (const [y, s] of prices) { path(`M${RIGHT} ${y}h5`, '#fff'); text(2798, y + 7, s, 'axis'); }
for (const [y, ty, s] of [[958, 975, '0.0402'], [ZERO, 1091, '0.00'], [1348, 1342, '-0.0843']]) {
  path(`M${RIGHT} ${y}h4`, '#fff'); text(2793, ty, s, 'axis');
}
out.push('<path d="M2792 537H2870V559H2792z" fill="#fff"/>');
text(2798, 555, '131.849', 'axis now');
for (let i = 0; i < 19; i++) {
  const minutes = 680 + i * 8;
  const x = X0 + 128 * i;
  path(`M${x} ${BOTTOM}V1357`, '#fff');
  const clock = `${Math.floor(minutes / 60)}:${String(minutes % 60).padStart(2, '0')}`;
  text(x - 4, 1375, '29 Mar ' + (i ? clock : '2023'));
}

// captions
out.push('<path d="M392 179l7-8 7 8z" fill="#fff"/>');
text(414, 179, 'USDJPY,M1', 'symbol');
['131.839', '131.852', '131.838', '131.849'].forEach((s, i) => text(532 + 72 * i, 179, s, 'axis'));
text(392, 979, 'MACD(12,26,9) 0.0131 0.0124');

// pointer
out.push('<path d="M851 257L922 219L913 244L1075 238V243L914 260L927 285z" fill="#f00" shape-rendering="auto"/>');

const chart = document.getElementById('chart');
chart.setAttribute('shape-rendering', 'crispEdges');
chart.innerHTML = out.join('');
```
